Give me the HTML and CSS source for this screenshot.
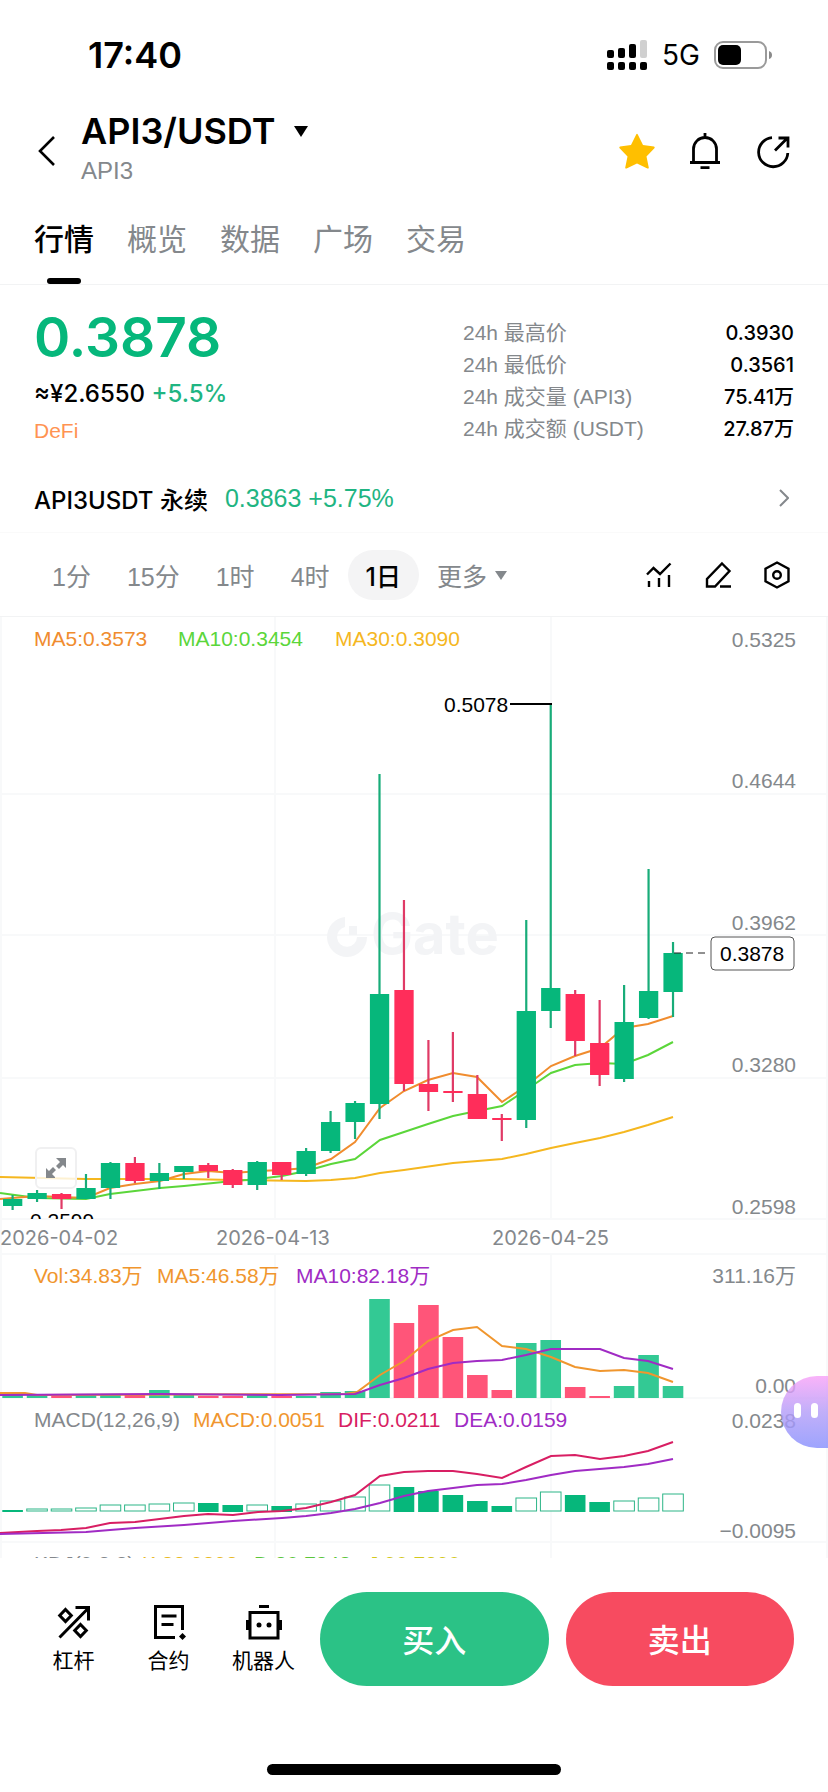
FILE: index.html
```html
<!DOCTYPE html>
<html lang="zh-CN">
<head>
<meta charset="utf-8">
<meta name="viewport" content="width=device-width, initial-scale=1">
<title>API3/USDT</title>
<link rel="stylesheet" href="styles.css">
</head>
<body>
<div class="status">
  <span class="status-time">17:40</span>
  <div class="status-right">
    <svg class="signal" viewBox="0 0 42 32" aria-hidden="true">
      <rect x="1" y="11" width="7" height="8" rx="2"/><rect x="12" y="9" width="7" height="10" rx="2"/><rect x="23" y="5" width="7" height="14" rx="2"/><rect x="34" y="1" width="7" height="18" rx="2" fill="#d0d0d0"/>
      <rect x="1" y="23" width="7" height="8" rx="2"/><rect x="12" y="23" width="7" height="8" rx="2"/><rect x="23" y="23" width="7" height="8" rx="2"/><rect x="34" y="23" width="7" height="8" rx="2"/>
    </svg>
    <span class="status-net">5G</span>
    <svg class="battery" viewBox="0 0 58 28" aria-hidden="true">
      <rect x="1" y="1" width="51" height="26" rx="8" fill="none" stroke="#9a9a9a" stroke-width="2"/>
      <rect x="4" y="4" width="23" height="20" rx="5"/>
      <path d="M55 10q3 1 3 4t-3 4z" fill="#8a8a8a"/>
    </svg>
  </div>
</div>

<header class="header">
  <button class="icon-btn back" aria-label="返回"><svg viewBox="0 0 18 32"><path d="M17 2 3 16l14 14" fill="none" stroke="#000" stroke-width="2.600"/></svg></button>
  <div class="pair">
    <button class="pair-name">API3/USDT<svg class="caret" viewBox="0 0 16 11"><path d="M1 0h14L8 11z"/></svg></button>
    <span class="pair-sub">API3</span>
  </div>
  <div class="header-icons">
    <button class="icon-btn" aria-label="收藏"><svg class="icon-lg" viewBox="0 0 36 36"><path d="M17.200 1.500q.8-1.400 1.600 0L24 12l11 1.600q1.200.6.4 1.600L27.500 23.500l2.300 11.200q-.2 1.200-1.400.8L18 30.500 7.600 35.500q-1.200.4-1.400-.8L8.500 23.500.6 15.200q-.8-1 .4-1.600L12 12z" fill="#ffbf00"/></svg></button>
    <button class="icon-btn" aria-label="提醒"><svg class="icon-lg" viewBox="0 0 36 36" fill="none" stroke="#000" stroke-width="2.800"><path d="M18 0v5M6.500 29V16a11.500 11.500 0 0 1 23 0v13M3 29.500h30M13.500 34.600h9"/></svg></button>
    <button class="icon-btn" aria-label="分享"><svg class="icon-lg" viewBox="0 0 36 36" fill="none" stroke="#000" stroke-width="2.800"><path d="M17 4.600A14.600 14.600 0 1 0 32.800 20M20 17.500 31.500 6M23.500 5h9.500v9.500"/></svg></button>
  </div>
</header>

<nav class="tabs">
  <button class="tab tab-active">行情</button>
  <button class="tab">概览</button>
  <button class="tab">数据</button>
  <button class="tab">广场</button>
  <button class="tab">交易</button>
</nav>

<section class="quote">
  <div class="quote-main">
    <strong class="price">0.3878</strong>
    <p class="fiat">≈¥2.6550 <span class="up">+5.5%</span></p>
    <a class="tag" href="#">DeFi</a>
  </div>
  <dl class="stats">
    <div class="stat"><dt>24h 最高价</dt><dd>0.3930</dd></div>
    <div class="stat"><dt>24h 最低价</dt><dd>0.3561</dd></div>
    <div class="stat"><dt>24h 成交量 (API3)</dt><dd>75.41万</dd></div>
    <div class="stat"><dt>24h 成交额 (USDT)</dt><dd>27.87万</dd></div>
  </dl>
</section>

<a class="perp" href="#">
  <span class="perp-name">API3USDT 永续</span>
  <span class="perp-price">0.3863 +5.75%</span>
  <svg class="chevron" viewBox="0 0 10 18"><path d="M1 1l8 8-8 8" fill="none" stroke="#84888c" stroke-width="2"/></svg>
</a>

<div class="toolbar">
  <div class="intervals">
    <button class="interval">1分</button>
    <button class="interval">15分</button>
    <button class="interval">1时</button>
    <button class="interval">4时</button>
    <button class="interval interval-active">1日</button>
    <button class="interval">更多<svg class="caret-sm" viewBox="0 0 12 10"><path d="M0 1h12L6 10z" fill="#84888c"/></svg></button>
  </div>
  <div class="tools">
    <button class="icon-btn" aria-label="指标"><svg class="icon-md" viewBox="0 0 28 28" fill="none" stroke="#000" stroke-width="2.400"><path d="M2 13.500 8.500 7l6.500 6L25.500 2.500M4 20v6M14 17v9M24 14v12"/></svg></button>
    <button class="icon-btn" aria-label="画线"><svg class="icon-md" viewBox="0 0 28 28" fill="none" stroke="#000" stroke-width="2.400"><path d="M18 2.500l7.500 7.500L11 25.500H3V18zM16 25.500h11"/></svg></button>
    <button class="icon-btn" aria-label="设置"><svg class="icon-md" viewBox="0 0 28 28" fill="none" stroke="#000" stroke-width="2.400"><path d="M14 1.500l11.500 6.200v12.600L14 26.500 2.500 20.300V7.700z"/><circle cx="14" cy="14" r="3.800"/></svg></button>
  </div>
</div>

<main class="chart">
  <svg id="chart" class="chart-svg" viewBox="0 617 828 941" role="img" aria-label="API3/USDT 日线">
    <defs>
      <clipPath id="main-clip"><rect x="0" y="617" width="828" height="602"/></clipPath>
    </defs>
    <path class="grid" d="M0 794H828M0 935H828M0 1078H828M0 1219H828M0 1254H828M0 1398H828M0 1542H828M1 617V1558M275 617V1219M275 1254V1558M551 617V1219M551 1254V1558M827 617V1558"/>
    <g class="watermark">
      <path d="M345 917a20 20 0 1 0 22 20h-10a10 10 0 1 1-12-10z"/>
      <path d="M349 926h8v9h-8z"/>
      <text x="371" y="954">Gate</text>
    </g>
    <g id="ma"></g>
    <g id="candles"></g>
    <g id="volume"></g>
    <g id="macd"></g>
    <path d="M510 704H552" stroke="#000" stroke-width="2"/>
    <path d="M674 953H706" stroke="#222" stroke-width="1" stroke-dasharray="7 5"/>
    <g class="lbl">
      <text x="34" y="646" fill="#f08c2e">MA5:0.3573</text>
      <text x="178" y="646" fill="#5bd63a">MA10:0.3454</text>
      <text x="335" y="646" fill="#f5b71f">MA30:0.3090</text>
      <text x="34" y="1283" fill="#f0962e">Vol:34.83万</text>
      <text x="157" y="1283" fill="#f0962e">MA5:46.58万</text>
      <text x="296" y="1283" fill="#a02bc4">MA10:82.18万</text>
      <text x="34" y="1427" fill="#84888c">MACD(12,26,9)</text>
      <text x="193" y="1427" fill="#f0962e">MACD:0.0051</text>
      <text x="338" y="1427" fill="#d81e63">DIF:0.0211</text>
      <text x="454" y="1427" fill="#a02bc4">DEA:0.0159</text>
      <text x="34" y="1571" fill="#84888c">KDJ(9,3,3)</text>
      <text x="142" y="1571" fill="#e8b923">K:83.9393</text>
      <text x="254" y="1571" fill="#5bc63a">D:80.7848</text>
      <text x="368" y="1571" fill="#d3c81c">J:90.7390</text>
    </g>
    <g class="axis axis-end">
      <text x="796" y="647">0.5325</text>
      <text x="796" y="788">0.4644</text>
      <text x="796" y="930">0.3962</text>
      <text x="796" y="1072">0.3280</text>
      <text x="796" y="1214">0.2598</text>
      <text x="796" y="1283">311.16万</text>
      <text x="796" y="1393">0.00</text>
      <text x="796" y="1428">0.0238</text>
      <text x="796" y="1538">−0.0095</text>
      <text x="796" y="1572">117.1304</text>
    </g>
    <g class="axis dates">
      <text x="0" y="1245">2026-04-02</text>
      <text x="216" y="1245">2026-04-13</text>
      <text x="492" y="1245">2026-04-25</text>
    </g>
    <g class="mark">
      <text x="444" y="712">0.5078</text>
      <text x="30" y="1228" clip-path="url(#main-clip)">0.2599</text>
      <rect x="711" y="937" width="83" height="33" rx="4" fill="#fff" stroke="#555"/>
      <text x="720" y="961">0.3878</text>
    </g>
  </svg>
  <button class="expand" aria-label="全屏"><svg viewBox="0 0 20 20" fill="#84888c"><path d="M10 0h10v10l-3-3-4 4-3-3 4-4zM0 10l3 3 4-4 3 3-4 4 3 3v1H0z"/></svg></button>
  <button class="bot" aria-label="助手"><span class="eye"></span><span class="eye"></span></button>
</main>

<footer class="bar">
  <div class="links">
    <button class="link"><svg class="icon-lg" viewBox="0 0 36 36" fill="none" stroke="#000" stroke-width="3"><path d="M3.500 33.500 32 4.500M19.500 3.500h13v13"/><path d="M9.500 5.500l5.800 6-5.800 6-5.800-6zM24.500 20.500l5.800 6-5.800 6-5.800-6z"/></svg>杠杆</button>
    <button class="link"><svg class="icon-lg" viewBox="0 0 36 36" fill="none" stroke="#000" stroke-width="3"><path d="M24 33.500H4.500V2.500h27V26M10.500 12h15M10.500 20.500h12"/><path d="M31.500 29l3.500 3.500-3.500 3.500-3.500-3.500z" fill="#000" stroke="none"/></svg>合约</button>
    <button class="link"><svg class="icon-lg" viewBox="0 0 36 36" fill="none" stroke="#000" stroke-width="3"><path d="M13 2.500h10M4 8.500h28V34H4z"/><path d="M2 16v10M34 16v10" stroke-width="4"/><circle cx="13" cy="21" r="2.500" fill="#000" stroke="none"/><circle cx="23" cy="21" r="2.500" fill="#000" stroke="none"/></svg>机器人</button>
  </div>
  <button class="trade buy">买入</button>
  <button class="trade sell">卖出</button>
</footer>
<div class="home"></div>
<script src="chart.js"></script>
</body>
</html>
```

FILE: styles.css
```css
* { box-sizing: border-box; }
body {
  margin: 0;
  background: #fff;
  color: #000;
  font-family: "Liberation Sans", "Noto Sans CJK SC", sans-serif;
  font-size: 21px;
}
button {
  margin: 0;
  padding: 0;
  border: 0;
  background: none;
  color: inherit;
  font: inherit;
}
a { color: inherit; text-decoration: none; }
p, dl, dd { margin: 0; }
svg { display: block; }

.status {
  display: flex;
  justify-content: space-between;
  align-items: center;
  height: 110px;
  padding: 0 56px 0 88px;
  font-family: Inter, sans-serif;
}
.status-time { font-size: 36px; font-weight: 600; }
.status-right { display: flex; align-items: center; gap: 14px; }
.status-net { font-size: 28px; }
.signal { width: 42px; height: 32px; }
.battery { width: 58px; height: 28px; }

.header {
  display: flex;
  align-items: center;
  height: 82px;
  padding: 0 37px;
}
.icon-btn { display: flex; }
.back svg { width: 18px; height: 32px; }
.pair { display: flex; flex-direction: column; flex: 1; padding-left: 26px; }
.pair-name {
  display: flex;
  align-items: center;
  gap: 18px;
  font-family: Inter, sans-serif;
  font-size: 36px;
  font-weight: 600;
  line-height: 40px;
}
.caret { width: 16px; height: 11px; }
.pair-sub { font-size: 24px; line-height: 40px; color: #84888c; }
.header-icons { display: flex; gap: 32px; }
.icon-lg { width: 36px; height: 36px; }
.icon-md { width: 28px; height: 28px; }

.tabs {
  display: flex;
  gap: 33px;
  padding: 0 34px;
  border-bottom: 1px solid #f2f3f4;
}
.tab {
  display: flex;
  flex-direction: column;
  align-items: center;
  gap: 17px;
  padding-top: 27px;
  font-size: 30px;
  line-height: 42px;
  color: #84888c;
}
.tab::after { content: ""; width: 34px; height: 6px; border-radius: 3px; }
.tab-active { color: #000; font-weight: 500; }
.tab-active::after { background: #000; }

.quote {
  display: flex;
  justify-content: space-between;
  padding: 24px 34px 19px;
}
.quote-main { display: flex; flex-direction: column; align-items: flex-start; }
.price {
  margin-bottom: 13px;
  font-family: Inter, sans-serif;
  font-size: 55px;
  font-weight: 600;
  line-height: 56px;
  color: #06b77b;
}
.fiat {
  margin-bottom: 8px;
  font-family: Inter, sans-serif;
  font-size: 24px;
  font-weight: 500;
  line-height: 32px;
}
.up { color: #1fb582; }
.tag { font-size: 21px; line-height: 26px; color: #ff9352; }
.stats { width: 331px; padding-top: 8px; }
.stat { display: flex; justify-content: space-between; line-height: 32px; }
.stat dt { color: #84888c; }
.stat dd { font-family: Inter, "Noto Sans CJK SC", sans-serif; font-size: 20px; font-weight: 500; }

.perp {
  display: flex;
  align-items: center;
  gap: 17px;
  height: 69px;
  padding: 0 39px 0 34px;
  border-bottom: 1px solid #fafafa;
  font-size: 25px;
}
.perp-name { font-family: Inter, "Noto Sans CJK SC", sans-serif; font-size: 24px; font-weight: 500; }
.perp-price { flex: 1; color: #1fb582; }
.chevron { width: 10px; height: 18px; }

.toolbar {
  display: flex;
  align-items: center;
  justify-content: space-between;
  height: 84px;
  padding: 0 37px 0 34px;
  border-bottom: 1px solid #f2f3f4;
}
.intervals { display: flex; }
.interval {
  display: flex;
  align-items: center;
  gap: 8px;
  height: 50px;
  padding: 0 18px;
  border-radius: 25px;
  font-size: 25px;
  color: #84888c;
}
.interval-active { background: #f4f4f5; color: #000; font-family: Inter, "Noto Sans CJK SC", sans-serif; font-weight: 500; }
.caret-sm { width: 12px; height: 10px; }
.tools { display: flex; gap: 31px; }

.chart { position: relative; overflow: hidden; }
.chart-svg { width: 100%; height: auto; }
.grid { fill: none; stroke: #f8f9fa; stroke-width: 2; }
.watermark { fill: #f3f4f6; font-family: Inter, sans-serif; font-size: 56px; font-weight: 700; }
.lbl { font-size: 21px; }
.axis { font-size: 21px; fill: #84888c; }
.axis-end { text-anchor: end; }
.dates { font-family: Inter, sans-serif; font-size: 20px; }
.mark { font-size: 21px; }
.line { fill: none; stroke-width: 2; }
.expand {
  position: absolute;
  left: 35px;
  bottom: 369px;
  display: grid;
  place-items: center;
  width: 42px;
  height: 42px;
  border: 2px solid #f0f0f1;
  border-radius: 6px;
  background: rgba(255, 255, 255, 0.8);
}
.expand svg { width: 20px; height: 20px; }
.bot {
  position: absolute;
  right: -40px;
  bottom: 110px;
  display: flex;
  gap: 10px;
  width: 87px;
  height: 72px;
  padding: 27px 0 0 13px;
  border-radius: 36px;
  background: linear-gradient(rgba(248, 160, 248, 0.8), rgba(178, 155, 248, 0.8) 50%, rgba(140, 148, 253, 0.85));
}
.eye { width: 7px; height: 15px; border-radius: 4px; background: #fff; }

.bar {
  display: flex;
  gap: 17px;
  padding: 34px 34px 0 26px;
}
.links { display: flex; margin-right: -8px; }
.link {
  display: flex;
  flex-direction: column;
  align-items: center;
  gap: 5px;
  width: 95px;
  padding-top: 12px;
  font-size: 21px;
  line-height: 32px;
}
.trade {
  flex: 1;
  height: 94px;
  padding-bottom: 3px;
  border-radius: 47px;
  color: #fff;
  font-size: 32px;
  font-weight: 500;
}
.buy { background: #2bc286; }
.sell { background: #f74b60; }
.home {
  width: 294px;
  height: 11px;
  margin: 78px auto 17px;
  border-radius: 6px;
  background: #000;
}
```

FILE: chart.js
```js
const NS = "http://www.w3.org/2000/svg";
const GREEN = "#06b77b", RED = "#ff2d5a";
const xAt = i => 12.6 + 24.46 * i;

function add(parent, name, attrs) {
  const el = document.createElementNS(NS, name);
  for (const k in attrs) el.setAttribute(k, attrs[k]);
  document.getElementById(parent).appendChild(el);
}
function line(parent, color, points) {
  add(parent, "polyline", { class: "line", stroke: color, points: points });
}

// direction, wick top, wick bottom, body top, body bottom
const candles = [
  ["u", 1195, 1210, 1199, 1206], ["u", 1190, 1202, 1193, 1199], ["d", 1193, 1209, 1194, 1199],
  ["u", 1174, 1199, 1188, 1199], ["u", 1162, 1199, 1163, 1188], ["d", 1157, 1183, 1163, 1181],
  ["u", 1163, 1189, 1173, 1181], ["u", 1166, 1179, 1166, 1172], ["d", 1163, 1178, 1165, 1171],
  ["d", 1169, 1188, 1170, 1185], ["u", 1161, 1190, 1162, 1185], ["d", 1162, 1180, 1162, 1175],
  ["u", 1148, 1176, 1151, 1174], ["u", 1111, 1153, 1122, 1151], ["u", 1101, 1139, 1103, 1122],
  ["u", 774, 1119, 994, 1104], ["d", 900, 1091, 990, 1084], ["d", 1040, 1111, 1084, 1092],
  ["d", 1032, 1102, 1091, 1093], ["d", 1075, 1119, 1094, 1119], ["d", 1114, 1141, 1118, 1120],
  ["u", 920, 1128, 1011, 1120], ["u", 704, 1028, 988, 1011], ["d", 990, 1056, 994, 1041],
  ["d", 1000, 1086, 1043, 1075], ["u", 985, 1082, 1022, 1079], ["u", 869, 1019, 991, 1018],
  ["u", 942, 1017, 953, 992]
];

line("ma", "#f5b71f", "0,1177 86,1179 184,1179 233,1180 306,1181 331,1180 355,1178 380,1173 404,1170 453,1163 502,1159 526,1154 551,1148 575,1143 600,1138 624,1132 648,1125 673,1117");
line("ma", "#5bd63a", "0,1193 37,1198 86,1199 110,1194 160,1188 184,1186 233,1181 258,1179 282,1176 306,1171 331,1164 355,1159 380,1140 404,1132 428,1124 453,1116 477,1111 502,1106 526,1090 551,1073 575,1065 600,1063 624,1064 648,1055 673,1042");
line("ma", "#f08c2e", "0,1199 37,1196 61,1197 86,1198 110,1188 135,1184 160,1181 184,1174 208,1171 233,1173 258,1171 282,1170 306,1168 331,1159 355,1142 380,1108 404,1091 428,1080 453,1073 477,1077 502,1102 526,1086 551,1066 575,1056 600,1048 624,1028 648,1024 673,1016");

candles.forEach(([dir, wt, wb, bt, bb], i) => {
  const fill = dir === "u" ? GREEN : RED;
  add("candles", "rect", { x: xAt(i) - 1.1, y: wt, width: 2.2, height: wb - wt, fill: dir === "u" ? "#18ac79" : "#e03a66" });
  add("candles", "rect", { x: xAt(i) - 9.6, y: bt, width: 19.3, height: bb - bt, fill });
});

const volumes = [1395, 1395, 1396, 1395, 1395, 1395, 1390, 1394, 1396, 1396, 1395, 1396, 1396, 1392, 1391, 1299, 1323, 1305, 1337, 1375, 1390, 1343, 1340, 1387, 1396, 1386, 1355, 1386];
volumes.forEach((top, i) => {
  add("volume", "rect", { x: xAt(i) - 10.3, y: top, width: 20.6, height: 1398 - top, fill: candles[i][0] === "u" ? "#33c994" : "#ff5579" });
});
line("volume", "#f0962e", "0,1393 25,1393 37,1395 345,1394 357,1392 380,1375 404,1361 428,1341 453,1330 477,1327 502,1346 526,1349 551,1357 575,1367 600,1371 624,1370 648,1373 673,1382");
line("volume", "#a02bc4", "0,1395 160,1394 280,1395 355,1394 380,1385 404,1378 428,1369 453,1363 477,1361 502,1360 526,1355 551,1349 600,1349 624,1358 648,1361 673,1369");

// top of each histogram bar; true marks a filled bar
const macd = [[1510, true], [1509], [1509], [1508], [1505], [1505], [1504], [1503], [1503, true], [1505, true], [1505], [1506, true], [1504], [1501], [1497], [1485], [1487, true], [1491, true], [1495, true], [1501, true], [1506, true], [1498], [1492], [1495, true], [1502, true], [1501], [1498], [1494]];
macd.forEach(([top, filled], i) => {
  add("macd", "rect", filled
    ? { x: xAt(i) - 10.3, y: top, width: 20.6, height: 1512 - top, fill: GREEN }
    : { x: xAt(i) - 10.3, y: top, width: 20.6, height: 1511 - top, fill: "#fff", stroke: "#2cb587" });
});
line("macd", "#d81e63", "0,1533 37,1531 61,1530 86,1528 110,1523 135,1522 184,1516 208,1514 233,1515 258,1512 282,1511 306,1508 331,1502 355,1495 380,1476 404,1472 428,1471 453,1471 477,1474 502,1478 526,1467 551,1456 575,1455 600,1459 624,1456 648,1451 673,1442");
line("macd", "#a02bc4", "0,1534 86,1532 110,1530 135,1528 184,1525 233,1521 282,1518 306,1516 331,1513 355,1509 380,1503 404,1496 428,1491 453,1488 477,1485 502,1484 526,1480 551,1475 575,1471 624,1467 648,1464 673,1459");
```
